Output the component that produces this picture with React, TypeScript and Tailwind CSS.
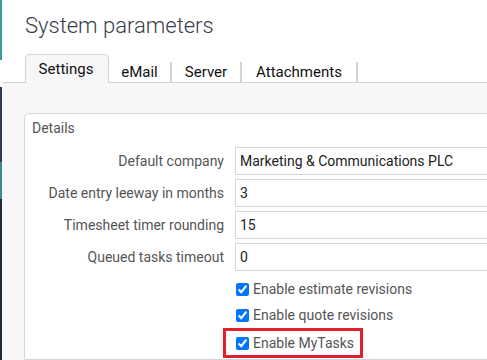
import React from "react";

const rows = [
  { label: "Default company", value: "Marketing & Communications PLC" },
  { label: "Date entry leeway in months", value: "3" },
  { label: "Timesheet timer rounding", value: "15" },
  { label: "Queued tasks timeout", value: "0" },
];

const checks = ["Enable estimate revisions", "Enable quote revisions", "Enable MyTasks"];

export default function App() {
  return (
    <div
      className="flex h-[360px] w-[487px] overflow-hidden bg-white"
      style={{ fontFamily: "Roboto, 'Liberation Sans', sans-serif" }}
    >
      <div className="flex w-[2px] shrink-0 flex-col">
        <div className="h-[60px] bg-[#3a9a9e]" />
        <div className="h-[27px] bg-white" />
        <div className="h-[75px] bg-[#2d3a4c]" />
        <div className="h-[37px] bg-[#3a8a92]" />
        <div className="flex-1 bg-[#1f2b3a]" />
      </div>
      <div className="flex min-w-0 flex-1 flex-col">
        <div className="pl-[23px] pt-[12px] text-[22px] font-light leading-[28px] text-[#383e4c]">
          System parameters
        </div>
        <div className="mt-[14px] flex h-[29px] items-end border-b border-[#d2d2d8] pl-[23px] text-[15px] text-[#111]">
          <div className="relative top-[1px] flex h-[29px] w-[84px] items-center justify-center rounded-t-[5px] border border-b-0 border-[#d2d2d8] bg-[#f7f7f9] pr-[2px]">
            Settings
          </div>
          <div className="flex h-[20px] w-[63px] items-center justify-center border-r-2 border-[#d2d2d8]">eMail</div>
          <div className="flex h-[20px] w-[70px] items-center justify-center border-r-2 border-[#d2d2d8]">Server</div>
          <div className="flex h-[20px] w-[116px] items-center justify-center border-r-2 border-[#d2d2d8]">Attachments</div>
        </div>
        <div className="flex-1 bg-[#f7f7f9] pl-[22px] pt-[30px]">
          <div className="h-full w-[500px] rounded-tl-[5px] border border-[#d5d5da] bg-white pl-[7px]">
            <div className="pt-[4px] text-[14px] leading-[20px] text-[#555]">Details</div>
            <div className="mt-[9px] flex flex-col gap-[4px]">
              {rows.map((r) => (
                <div key={r.label} className="flex h-[28px] items-center">
                  <div className="w-[203px] pr-[11px] text-right text-[14px] text-[#555]">{r.label}</div>
                  <div className="flex h-[28px] w-[270px] items-center border border-[#d5d5da] pl-[4px] text-[14px] text-[#222]">
                    {r.value}
                  </div>
                </div>
              ))}
            </div>
            <div className="mt-[8px] flex flex-col gap-[6px] pl-[204px]">
              {checks.map((c, i) => (
                <label
                  key={c}
                  className={
                    i === 2
                      ? "ml-[-13px] mt-[-3px] flex h-[30px] w-[140px] items-center gap-[4px] border-[3px] border-[#e0202a] pl-[10px] text-[14px] text-[#555]"
                      : "flex h-[20px] items-center gap-[4px] text-[14px] text-[#555]"
                  }
                >
                  <input type="checkbox" defaultChecked className="m-0 h-[13px] w-[13px]" />
                  <span>{c}</span>
                </label>
              ))}
            </div>
          </div>
        </div>
      </div>
    </div>
  );
}
